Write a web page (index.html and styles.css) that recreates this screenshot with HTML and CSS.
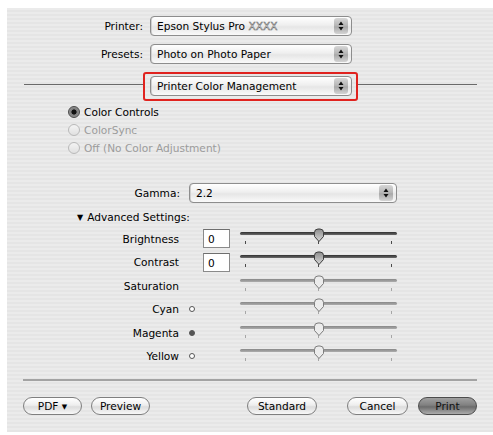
FILE: index.html
```html
<!DOCTYPE html>
<html lang="en">
<head>
  <meta charset="UTF-8">
  <meta name="viewport" content="width=device-width, initial-scale=1.0">
  <title>Print</title>
  <link rel="stylesheet" href="styles.css">
</head>
<body>

  <div class="sheet">
    <div class="presets">
      <div class="field">
        <span class="field-label">Printer:</span>
        <div class="popup">
          <span class="popup-text">Epson Stylus Pro <span class="hollow">XXXX</span></span>
          <span class="popup-arrows"><svg width="6" height="10" viewBox="0 0 6 10"><path d="M3 0.5 L5.5 4 H0.5 Z M3 9.5 L5.5 6 H0.5 Z" fill="#111"/></svg></span>
        </div>
      </div>
      <div class="field">
        <span class="field-label">Presets:</span>
        <div class="popup">
          <span class="popup-text">Photo on Photo Paper</span>
          <span class="popup-arrows"><svg width="6" height="10" viewBox="0 0 6 10"><path d="M3 0.5 L5.5 4 H0.5 Z M3 9.5 L5.5 6 H0.5 Z" fill="#111"/></svg></span>
        </div>
      </div>
    </div>

    <div class="pane-divider">
      <span class="rule"></span>
      <div class="highlight">
        <div class="popup">
          <span class="popup-text">Printer Color Management</span>
          <span class="popup-arrows"><svg width="6" height="10" viewBox="0 0 6 10"><path d="M3 0.5 L5.5 4 H0.5 Z M3 9.5 L5.5 6 H0.5 Z" fill="#111"/></svg></span>
        </div>
      </div>
      <span class="rule"></span>
    </div>

    <!-- Color mode -->
    <div class="modes">
      <div class="radio-row"><span class="radio checked"></span>Color Controls</div>
      <div class="radio-row disabled"><span class="radio"></span>ColorSync</div>
      <div class="radio-row disabled"><span class="radio"></span>Off (No Color Adjustment)</div>
    </div>

    <div class="gamma">
      <span class="gamma-label">Gamma:</span>
      <div class="popup">
        <span class="popup-text">2.2</span>
        <span class="popup-arrows"><svg width="6" height="10" viewBox="0 0 6 10"><path d="M3 0.5 L5.5 4 H0.5 Z M3 9.5 L5.5 6 H0.5 Z" fill="#111"/></svg></span>
      </div>
    </div>

    <div class="advanced"><span class="disclosure">&#9660;</span>Advanced Settings:</div>

    <!-- Adjustment sliders -->
    <div class="adjustments">
      <div class="adjust-row">
        <span class="adjust-label">Brightness</span>
        <span class="dot-cell"></span>
        <span class="value-box">0</span>
        <div class="slider">
          <span class="track"></span>
          <span class="ticks"><i></i><i></i><i></i></span>
          <svg class="thumb" width="12" height="15" viewBox="0 0 12 15"><defs><linearGradient id="tg1" x1="0" y1="0" x2="0" y2="1"><stop offset="0" stop-color="#8c8c8c"/><stop offset="1" stop-color="#d8d8d8"/></linearGradient></defs><path d="M1.5 4.5 Q1.5 1 5 1 H7 Q10.5 1 10.5 4.5 V8.5 L6 13.5 L1.5 8.5 Z" fill="url(#tg1)" stroke="#3c3c3c"/></svg>
        </div>
      </div>
      <div class="adjust-row">
        <span class="adjust-label">Contrast</span>
        <span class="dot-cell"></span>
        <span class="value-box">0</span>
        <div class="slider">
          <span class="track"></span>
          <span class="ticks"><i></i><i></i><i></i></span>
          <svg class="thumb" width="12" height="15" viewBox="0 0 12 15"><path d="M1.5 4.5 Q1.5 1 5 1 H7 Q10.5 1 10.5 4.5 V8.5 L6 13.5 L1.5 8.5 Z" fill="url(#tg1)" stroke="#3c3c3c"/></svg>
        </div>
      </div>
      <div class="adjust-row">
        <span class="adjust-label">Saturation</span>
        <span class="dot-cell"></span>
        <span class="value-none"></span>
        <div class="slider off">
          <span class="track"></span>
          <span class="ticks"><i></i><i></i><i></i></span>
          <svg class="thumb" width="12" height="15" viewBox="0 0 12 15"><path d="M1.5 4.5 Q1.5 1 5 1 H7 Q10.5 1 10.5 4.5 V8.5 L6 13.5 L1.5 8.5 Z" fill="#ececec" stroke="#7c7c7c"/></svg>
        </div>
      </div>
      <div class="adjust-row">
        <span class="adjust-label">Cyan</span>
        <span class="dot-cell"><span class="dot"></span></span>
        <span class="value-none"></span>
        <div class="slider off">
          <span class="track"></span>
          <span class="ticks"><i></i><i></i><i></i></span>
          <svg class="thumb" width="12" height="15" viewBox="0 0 12 15"><path d="M1.5 4.5 Q1.5 1 5 1 H7 Q10.5 1 10.5 4.5 V8.5 L6 13.5 L1.5 8.5 Z" fill="#ececec" stroke="#7c7c7c"/></svg>
        </div>
      </div>
      <div class="adjust-row">
        <span class="adjust-label">Magenta</span>
        <span class="dot-cell"><span class="dot filled"></span></span>
        <span class="value-none"></span>
        <div class="slider off">
          <span class="track"></span>
          <span class="ticks"><i></i><i></i><i></i></span>
          <svg class="thumb" width="12" height="15" viewBox="0 0 12 15"><path d="M1.5 4.5 Q1.5 1 5 1 H7 Q10.5 1 10.5 4.5 V8.5 L6 13.5 L1.5 8.5 Z" fill="#ececec" stroke="#7c7c7c"/></svg>
        </div>
      </div>
      <div class="adjust-row">
        <span class="adjust-label">Yellow</span>
        <span class="dot-cell"><span class="dot"></span></span>
        <span class="value-none"></span>
        <div class="slider off">
          <span class="track"></span>
          <span class="ticks"><i></i><i></i><i></i></span>
          <svg class="thumb" width="12" height="15" viewBox="0 0 12 15"><path d="M1.5 4.5 Q1.5 1 5 1 H7 Q10.5 1 10.5 4.5 V8.5 L6 13.5 L1.5 8.5 Z" fill="#ececec" stroke="#7c7c7c"/></svg>
        </div>
      </div>
    </div>

    <div class="bottom-rule"></div>

    <div class="buttons">
      <button class="btn btn-pdf">PDF <span class="caret">&#9660;</span></button>
      <button class="btn btn-preview">Preview</button>
      <button class="btn btn-standard">Standard</button>
      <button class="btn btn-cancel">Cancel</button>
      <button class="btn btn-print">Print</button>
    </div>
  </div>

</body>
</html>
```

FILE: styles.css
```css
/* Global styles */
* {
  margin: 0;
  padding: 0;
  box-sizing: border-box;
}

body {
  background: #fff;
  font-family: 'DejaVu Sans', 'Liberation Sans', sans-serif;
  font-size: 10.6px;
  color: #000;
}

.sheet {
  margin: 8px 0 0 7px;
  width: 486px;
  height: 424px;
  padding-top: 8px;
  background: repeating-linear-gradient(#ebebeb 0 2px, #e5e5e5 2px 4px);
}

/* Popup menus */
.popup {
  display: flex;
  align-items: center;
  height: 20px;
  border: 1px solid #8d8d8d;
  border-radius: 4px;
  background: linear-gradient(#ffffff, #efefef 45%, #e6e6e6 55%, #fafafa);
  box-shadow: inset 1px 0 0 #cfcfcf;
  padding-left: 6px;
}

.popup-text {
  flex: 1;
  white-space: nowrap;
}

.hollow {
  color: #f6f6f6;
  -webkit-text-stroke: 0.5px #6a6a6a;
}

.popup-arrows {
  width: 14px;
  height: 16px;
  margin-right: 3px;
  border-radius: 3px;
  background: linear-gradient(#d6d6d6, #b4b4b4 50%, #a8a8a8 55%, #d4d4d4);
  display: flex;
  align-items: center;
  justify-content: center;
}

/* Printer / presets */
.field {
  display: flex;
  align-items: center;
  margin-bottom: 8px;
}

.field-label {
  width: 136px;
  text-align: right;
  margin-right: 7px;
}

.field .popup {
  width: 202px;
}

.pane-divider {
  display: flex;
  padding: 0 16px 0 17px;
}

.rule {
  flex: 1;
  height: 1px;
  margin-top: 12px;
  background: #6a6a6a;
}

.highlight {
  width: 215px;
  border: 2px solid #e0231f;
  border-radius: 3px;
  padding: 2px 4px 3px 5px;
}

/* Radios */
.modes {
  margin-top: 2px;
  padding-left: 61px;
}

.radio-row {
  display: flex;
  align-items: center;
  height: 18px;
}

.radio-row.disabled {
  color: #9c9c9c;
}

.radio {
  width: 12px;
  height: 12px;
  border-radius: 50%;
  margin-right: 4px;
  border: 1px solid #b9b9b9;
  background: linear-gradient(#f4f4f4, #e0e0e0);
}

.radio.checked {
  border-color: #4a4a4a;
  background: radial-gradient(circle, #111 0 2.3px, #7a7a7a 2.8px, #a8a8a8 100%);
}

/* Gamma */
.gamma {
  display: flex;
  align-items: center;
  margin-top: 26px;
}

.gamma-label {
  width: 173px;
  text-align: right;
  margin-right: 9px;
}

.gamma .popup {
  width: 208px;
}

.advanced {
  margin-top: 6px;
  height: 16px;
  line-height: 16px;
  padding-left: 70px;
}

.disclosure {
  font-size: 8px;
  margin-right: 4px;
  vertical-align: 1px;
}

/* Slider rows */
.adjustments {
  margin-top: 2.3px;
}

.adjust-row {
  display: flex;
  align-items: center;
  height: 23.4px;
}

.adjust-label {
  width: 172px;
  text-align: right;
}

.dot-cell {
  width: 24px;
  display: flex;
  justify-content: center;
  padding-left: 2px;
}

.dot {
  width: 6px;
  height: 6px;
  border-radius: 50%;
  border: 1px solid #555;
  background: #fff;
}

.dot.filled {
  background: #555;
}

.value-box {
  width: 27px;
  height: 19px;
  border: 1px solid #8a8a8a;
  border-top-color: #6e6e6e;
  background: #fff;
  padding: 2px 0 0 4px;
  line-height: 14px;
}

.value-none {
  width: 27px;
}

.slider {
  position: relative;
  width: 157px;
  height: 19px;
  margin-left: 10px;
  margin-top: -3px;
  display: flex;
  flex-direction: column;
}

.track {
  height: 3px;
  margin-top: 4px;
  border-radius: 2px;
  background: linear-gradient(#2e2e2e, #6a6a6a);
}

.ticks {
  display: flex;
  justify-content: space-between;
  padding: 0 5px;
  margin-top: 6px;
}

.ticks i {
  width: 1px;
  height: 3px;
  background: #4a4a4a;
}

.slider.off .track {
  background: linear-gradient(#888, #adadad);
}

.slider.off .ticks i {
  background: #a6a6a6;
}

.thumb {
  position: absolute;
  left: 73px;
  top: 0;
}

.bottom-rule {
  height: 2px;
  margin: 11px 16px 0 16px;
  background: #a3a3a3;
}

/* Buttons */
.buttons {
  display: flex;
  margin-top: 16px;
  padding-left: 16px;
}

.btn {
  height: 18px;
  border: 1px solid #7f7f7f;
  border-radius: 9px;
  background: linear-gradient(#ffffff, #eeeeee 45%, #dcdcdc 55%, #f8f8f8);
  font-family: 'DejaVu Sans', 'Liberation Sans', sans-serif;
  font-size: 10.6px;
  color: #000;
  line-height: 16px;
  text-align: center;
}

.caret {
  font-size: 7px;
  vertical-align: 1px;
}

.btn-pdf { width: 59px; }
.btn-preview { width: 59px; margin-left: 9px; }
.btn-standard { width: 70px; margin-left: 97px; }
.btn-cancel { width: 61px; margin-left: 30px; }

.btn-print {
  width: 59px;
  margin-left: 10px;
  border-color: #4c4c4c;
  background: linear-gradient(#a0a0a0, #808080 45%, #6c6c6c 55%, #acacac);
  color: #111;
}
```
